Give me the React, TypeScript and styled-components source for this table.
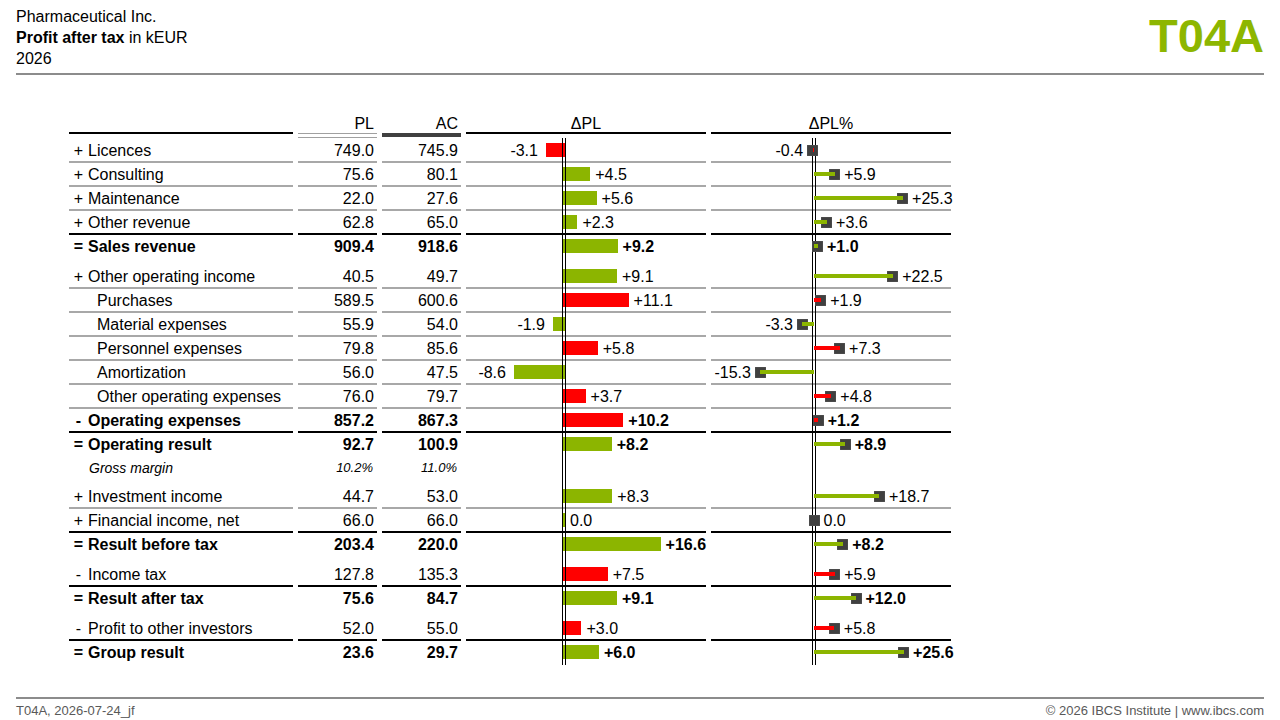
import React from 'react';
import styled, { createGlobalStyle } from 'styled-components';

type Line = 'gray' | 'black' | 'none';
type Tone = 'good' | 'bad';

interface PnlRow {
  sign?: '+' | '-' | '=';
  label: string;
  pl: string;
  ac: string;
  delta: number;
  pct: number;
  tone: Tone;
  total?: boolean;
  sub?: boolean;
  line: Line;
  gapAfter?: number;
}

const GREEN = '#8cb500';
const RED = '#ff0000';
const PIN = '#404040';

const DELTA_ZERO = 98;
const DELTA_SCALE = 5.82;
const PCT_ZERO = 103;
const PCT_SCALE = 3.5;

const rows: PnlRow[] = [
  { sign: '+', label: 'Licences', pl: '749.0', ac: '745.9', delta: -3.1, pct: -0.4, tone: 'bad', line: 'gray' },
  { sign: '+', label: 'Consulting', pl: '75.6', ac: '80.1', delta: 4.5, pct: 5.9, tone: 'good', line: 'gray' },
  { sign: '+', label: 'Maintenance', pl: '22.0', ac: '27.6', delta: 5.6, pct: 25.3, tone: 'good', line: 'gray' },
  { sign: '+', label: 'Other revenue', pl: '62.8', ac: '65.0', delta: 2.3, pct: 3.6, tone: 'good', line: 'black' },
  { sign: '=', label: 'Sales revenue', pl: '909.4', ac: '918.6', delta: 9.2, pct: 1.0, tone: 'good', total: true, line: 'none', gapAfter: 6 },
  { sign: '+', label: 'Other operating income', pl: '40.5', ac: '49.7', delta: 9.1, pct: 22.5, tone: 'good', line: 'gray' },
  { label: 'Purchases', pl: '589.5', ac: '600.6', delta: 11.1, pct: 1.9, tone: 'bad', sub: true, line: 'gray' },
  { label: 'Material expenses', pl: '55.9', ac: '54.0', delta: -1.9, pct: -3.3, tone: 'good', sub: true, line: 'gray' },
  { label: 'Personnel expenses', pl: '79.8', ac: '85.6', delta: 5.8, pct: 7.3, tone: 'bad', sub: true, line: 'gray' },
  { label: 'Amortization', pl: '56.0', ac: '47.5', delta: -8.6, pct: -15.3, tone: 'good', sub: true, line: 'gray' },
  { label: 'Other operating expenses', pl: '76.0', ac: '79.7', delta: 3.7, pct: 4.8, tone: 'bad', sub: true, line: 'gray' },
  { sign: '-', label: 'Operating expenses', pl: '857.2', ac: '867.3', delta: 10.2, pct: 1.2, tone: 'bad', total: true, line: 'black' },
  { sign: '=', label: 'Operating result', pl: '92.7', ac: '100.9', delta: 8.2, pct: 8.9, tone: 'good', total: true, line: 'none' },
];

const rowsAfterMargin: PnlRow[] = [
  { sign: '+', label: 'Investment income', pl: '44.7', ac: '53.0', delta: 8.3, pct: 18.7, tone: 'good', line: 'gray' },
  { sign: '+', label: 'Financial income, net', pl: '66.0', ac: '66.0', delta: 0, pct: 0, tone: 'good', line: 'black' },
  { sign: '=', label: 'Result before tax', pl: '203.4', ac: '220.0', delta: 16.6, pct: 8.2, tone: 'good', total: true, line: 'none', gapAfter: 6 },
  { sign: '-', label: 'Income tax', pl: '127.8', ac: '135.3', delta: 7.5, pct: 5.9, tone: 'bad', line: 'black' },
  { sign: '=', label: 'Result after tax', pl: '75.6', ac: '84.7', delta: 9.1, pct: 12.0, tone: 'good', total: true, line: 'none', gapAfter: 6 },
  { sign: '-', label: 'Profit to other investors', pl: '52.0', ac: '55.0', delta: 3.0, pct: 5.8, tone: 'bad', line: 'black' },
  { sign: '=', label: 'Group result', pl: '23.6', ac: '29.7', delta: 6.0, pct: 25.6, tone: 'good', total: true, line: 'none' },
];

const fmt = (v: number) => (v === 0 ? '0.0' : `${v > 0 ? '+' : '-'}${Math.abs(v).toFixed(1)}`);

const lineColor = (l: Line) => (l === 'gray' ? '#a8a8a8' : l === 'black' ? '#000' : 'transparent');
const toneColor = (t: Tone) => (t === 'good' ? GREEN : RED);

const GlobalStyle = createGlobalStyle`
  html, body {
    margin: 0;
    padding: 0;
    background: #fff;
  }
  body {
    font-family: "Liberation Sans", Arial, sans-serif;
    color: #000;
  }
  * {
    box-sizing: border-box;
  }
`;

const Page = styled.div`
  width: 1280px;
  height: 720px;
  padding: 0 16px;
  display: flex;
  flex-direction: column;
  overflow: hidden;
`;

const Header = styled.header`
  height: 75px;
  flex: none;
  display: flex;
  justify-content: space-between;
  align-items: flex-start;
  border-bottom: 2px solid #8c8c8c;
`;

const TitleBlock = styled.div`
  padding-top: 6px;
  font-size: 16px;
  line-height: 21px;
`;

const Strong = styled.span`
  font-weight: bold;
`;

const ReportCode = styled.div`
  margin-top: 12px;
  font-size: 47px;
  line-height: 47px;
  font-weight: bold;
  color: #8db600;
`;

const Main = styled.main`
  flex: 1;
  padding: 35px 0 0 53px;
`;

const Footer = styled.footer`
  height: 23px;
  flex: none;
  border-top: 2px solid #8c8c8c;
  padding-top: 4px;
  display: flex;
  justify-content: space-between;
  font-size: 13px;
  line-height: 15px;
  color: #595959;
`;

const Grid = styled.div<{ $gap?: number }>`
  display: grid;
  grid-template-columns: 224px 79px 79px 240px 240px;
  column-gap: 5px;
  margin-bottom: ${(p) => p.$gap ?? 0}px;
  font-size: 16px;
`;

const HeadCell = styled.div<{ $align: 'right' | 'center' }>`
  height: 22px;
  display: flex;
  align-items: flex-end;
  justify-content: ${(p) => (p.$align === 'right' ? 'flex-end' : 'center')};
  padding-right: ${(p) => (p.$align === 'right' ? 3 : 0)}px;
  line-height: 16px;
`;

const Rule = styled.div<{ $kind: 'black' | 'double' | 'bar' }>`
  height: 7px;
  &::before {
    content: '';
    display: block;
    ${(p) =>
      p.$kind === 'black'
        ? 'height: 2px; background: #000;'
        : p.$kind === 'double'
          ? 'margin-top: 1px; height: 3px; border-top: 1px solid #a0a0a0; border-bottom: 1px solid #a0a0a0;'
          : `margin-top: 1px; height: 4px; background: ${PIN};`}
  }
`;

const Body = styled.div`
  position: relative;
`;

const Axis = styled.div<{ $left: number }>`
  position: absolute;
  top: -1px;
  bottom: 0;
  left: ${(p) => p.$left}px;
  width: 4px;
  border-left: 1px solid #000;
  border-right: 1px solid #000;
  z-index: 1;
`;

const Cell = styled.div<{ $line: Line }>`
  height: 24px;
  border-bottom: 2px solid ${(p) => lineColor(p.$line)};
  display: flex;
  align-items: center;
  line-height: 18px;
`;

const TextCell = styled(Cell)`
  padding-top: 2px;
`;

const LabelCell = styled(TextCell)<{ $bold?: boolean; $indent: number }>`
  padding-left: ${(p) => p.$indent}px;
  font-weight: ${(p) => (p.$bold ? 'bold' : 'normal')};
  white-space: nowrap;
`;

const Sign = styled.span`
  width: 13px;
  margin-right: 3px;
  text-align: center;
  flex: none;
`;

const NumCell = styled(TextCell)<{ $bold?: boolean }>`
  justify-content: flex-end;
  padding-right: 3px;
  font-weight: ${(p) => (p.$bold ? 'bold' : 'normal')};
`;

const NoteLabel = styled(Cell)`
  padding-left: 20px;
  font-size: 14px;
  font-style: italic;
`;

const NoteValue = styled(Cell)`
  justify-content: flex-end;
  padding-right: 4px;
  font-size: 13px;
  font-style: italic;
`;

const ChartCell = styled(Cell)`
  align-items: stretch;
`;

const NegSide = styled.div<{ $zero: number; $gap: number }>`
  width: ${(p) => p.$zero}px;
  flex: none;
  display: flex;
  justify-content: flex-end;
  align-items: center;
  gap: ${(p) => p.$gap}px;
`;

const PosSide = styled.div<{ $gap: number }>`
  flex: 1;
  display: flex;
  align-items: center;
  gap: ${(p) => p.$gap}px;
  white-space: nowrap;
`;

const Bar = styled.div<{ $tone: Tone; $neg: boolean }>`
  height: 14px;
  flex: none;
  background: ${(p) => toneColor(p.$tone)};
  ${(p) => (p.$neg ? 'margin-right: -2px;' : 'margin-left: -2px;')}
`;

const Value = styled.span<{ $bold?: boolean }>`
  padding-top: 2px;
  font-weight: ${(p) => (p.$bold ? 'bold' : 'normal')};
  white-space: nowrap;
`;

const Pin = styled.div<{ $neg: boolean }>`
  display: flex;
  flex: none;
  align-items: center;
  flex-direction: ${(p) => (p.$neg ? 'row-reverse' : 'row')};
  position: relative;
  z-index: 2;
`;

const Stem = styled.div<{ $tone: Tone }>`
  height: 4px;
  flex: none;
  background: ${(p) => toneColor(p.$tone)};
  position: relative;
  z-index: 1;
`;

const Head = styled.div<{ $neg: boolean }>`
  width: 11px;
  height: 11px;
  flex: none;
  border-radius: 1px;
  background: ${PIN};
  box-shadow: inset 0 0 0 1px #4a4a4a;
  ${(p) => (p.$neg ? 'margin-right: -5.5px;' : 'margin-left: -5.5px;')}
`;

const DeltaBar: React.FC<{ row: PnlRow }> = ({ row }) => {
  const neg = row.delta < 0;
  const w = row.delta === 0 ? 1 : Math.abs(row.delta) * DELTA_SCALE;
  const bar = <Bar $tone={row.tone} $neg={neg} style={{ width: w + 2 }} />;
  const value = <Value $bold={row.total}>{fmt(row.delta)}</Value>;
  return (
    <ChartCell $line={row.line}>
      <NegSide $zero={DELTA_ZERO} $gap={8}>
        {neg && value}
        {neg && bar}
      </NegSide>
      <PosSide $gap={5}>
        {!neg && bar}
        {!neg && value}
      </PosSide>
    </ChartCell>
  );
};

const DeltaPin: React.FC<{ row: PnlRow }> = ({ row }) => {
  const neg = row.pct < 0;
  const w = Math.abs(row.pct) * PCT_SCALE;
  const pin = (
    <Pin $neg={neg}>
      <Stem $tone={row.tone} style={{ width: w }} />
      <Head $neg={neg} />
    </Pin>
  );
  const value = <Value $bold={row.total}>{fmt(row.pct)}</Value>;
  return (
    <ChartCell $line={row.line}>
      <NegSide $zero={PCT_ZERO} $gap={4}>
        {neg && value}
        {neg && pin}
      </NegSide>
      <PosSide $gap={4}>
        {!neg && pin}
        {!neg && value}
      </PosSide>
    </ChartCell>
  );
};

const StatementRow: React.FC<{ row: PnlRow }> = ({ row }) => (
  <Grid $gap={row.gapAfter}>
    <LabelCell $line={row.line} $bold={row.total} $indent={row.sub ? 28 : 3}>
      {row.sign && <Sign>{row.sign}</Sign>}
      {row.label}
    </LabelCell>
    <NumCell $line={row.line} $bold={row.total}>
      {row.pl}
    </NumCell>
    <NumCell $line={row.line} $bold={row.total}>
      {row.ac}
    </NumCell>
    <DeltaBar row={row} />
    <DeltaPin row={row} />
  </Grid>
);

const MarginRow: React.FC = () => (
  <Grid $gap={4}>
    <NoteLabel $line="none">Gross margin</NoteLabel>
    <NoteValue $line="none">10.2%</NoteValue>
    <NoteValue $line="none">11.0%</NoteValue>
    <Cell $line="none" />
    <Cell $line="none" />
  </Grid>
);

export default function App() {
  return (
    <>
      <GlobalStyle />
      <Page>
        <Header>
          <TitleBlock>
            <div>Pharmaceutical Inc.</div>
            <div>
              <Strong>Profit after tax</Strong> in kEUR
            </div>
            <div>2026</div>
          </TitleBlock>
          <ReportCode>T04A</ReportCode>
        </Header>

        <Main>
          <Grid>
            <HeadCell $align="right" />
            <HeadCell $align="right">PL</HeadCell>
            <HeadCell $align="right">AC</HeadCell>
            <HeadCell $align="center">ΔPL</HeadCell>
            <HeadCell $align="center">ΔPL%</HeadCell>
          </Grid>
          <Grid>
            <Rule $kind="black" />
            <Rule $kind="double" />
            <Rule $kind="bar" />
            <Rule $kind="black" />
            <Rule $kind="black" />
          </Grid>
          <Body>
            <Axis $left={493} />
            <Axis $left={743} />
            {rows.map((r) => (
              <StatementRow key={r.label} row={r} />
            ))}
            <MarginRow />
            {rowsAfterMargin.map((r) => (
              <StatementRow key={r.label} row={r} />
            ))}
          </Body>
        </Main>

        <Footer>
          <span>T04A, 2026-07-24_jf</span>
          <span>© 2026 IBCS Institute | www.ibcs.com</span>
        </Footer>
      </Page>
    </>
  );
}
